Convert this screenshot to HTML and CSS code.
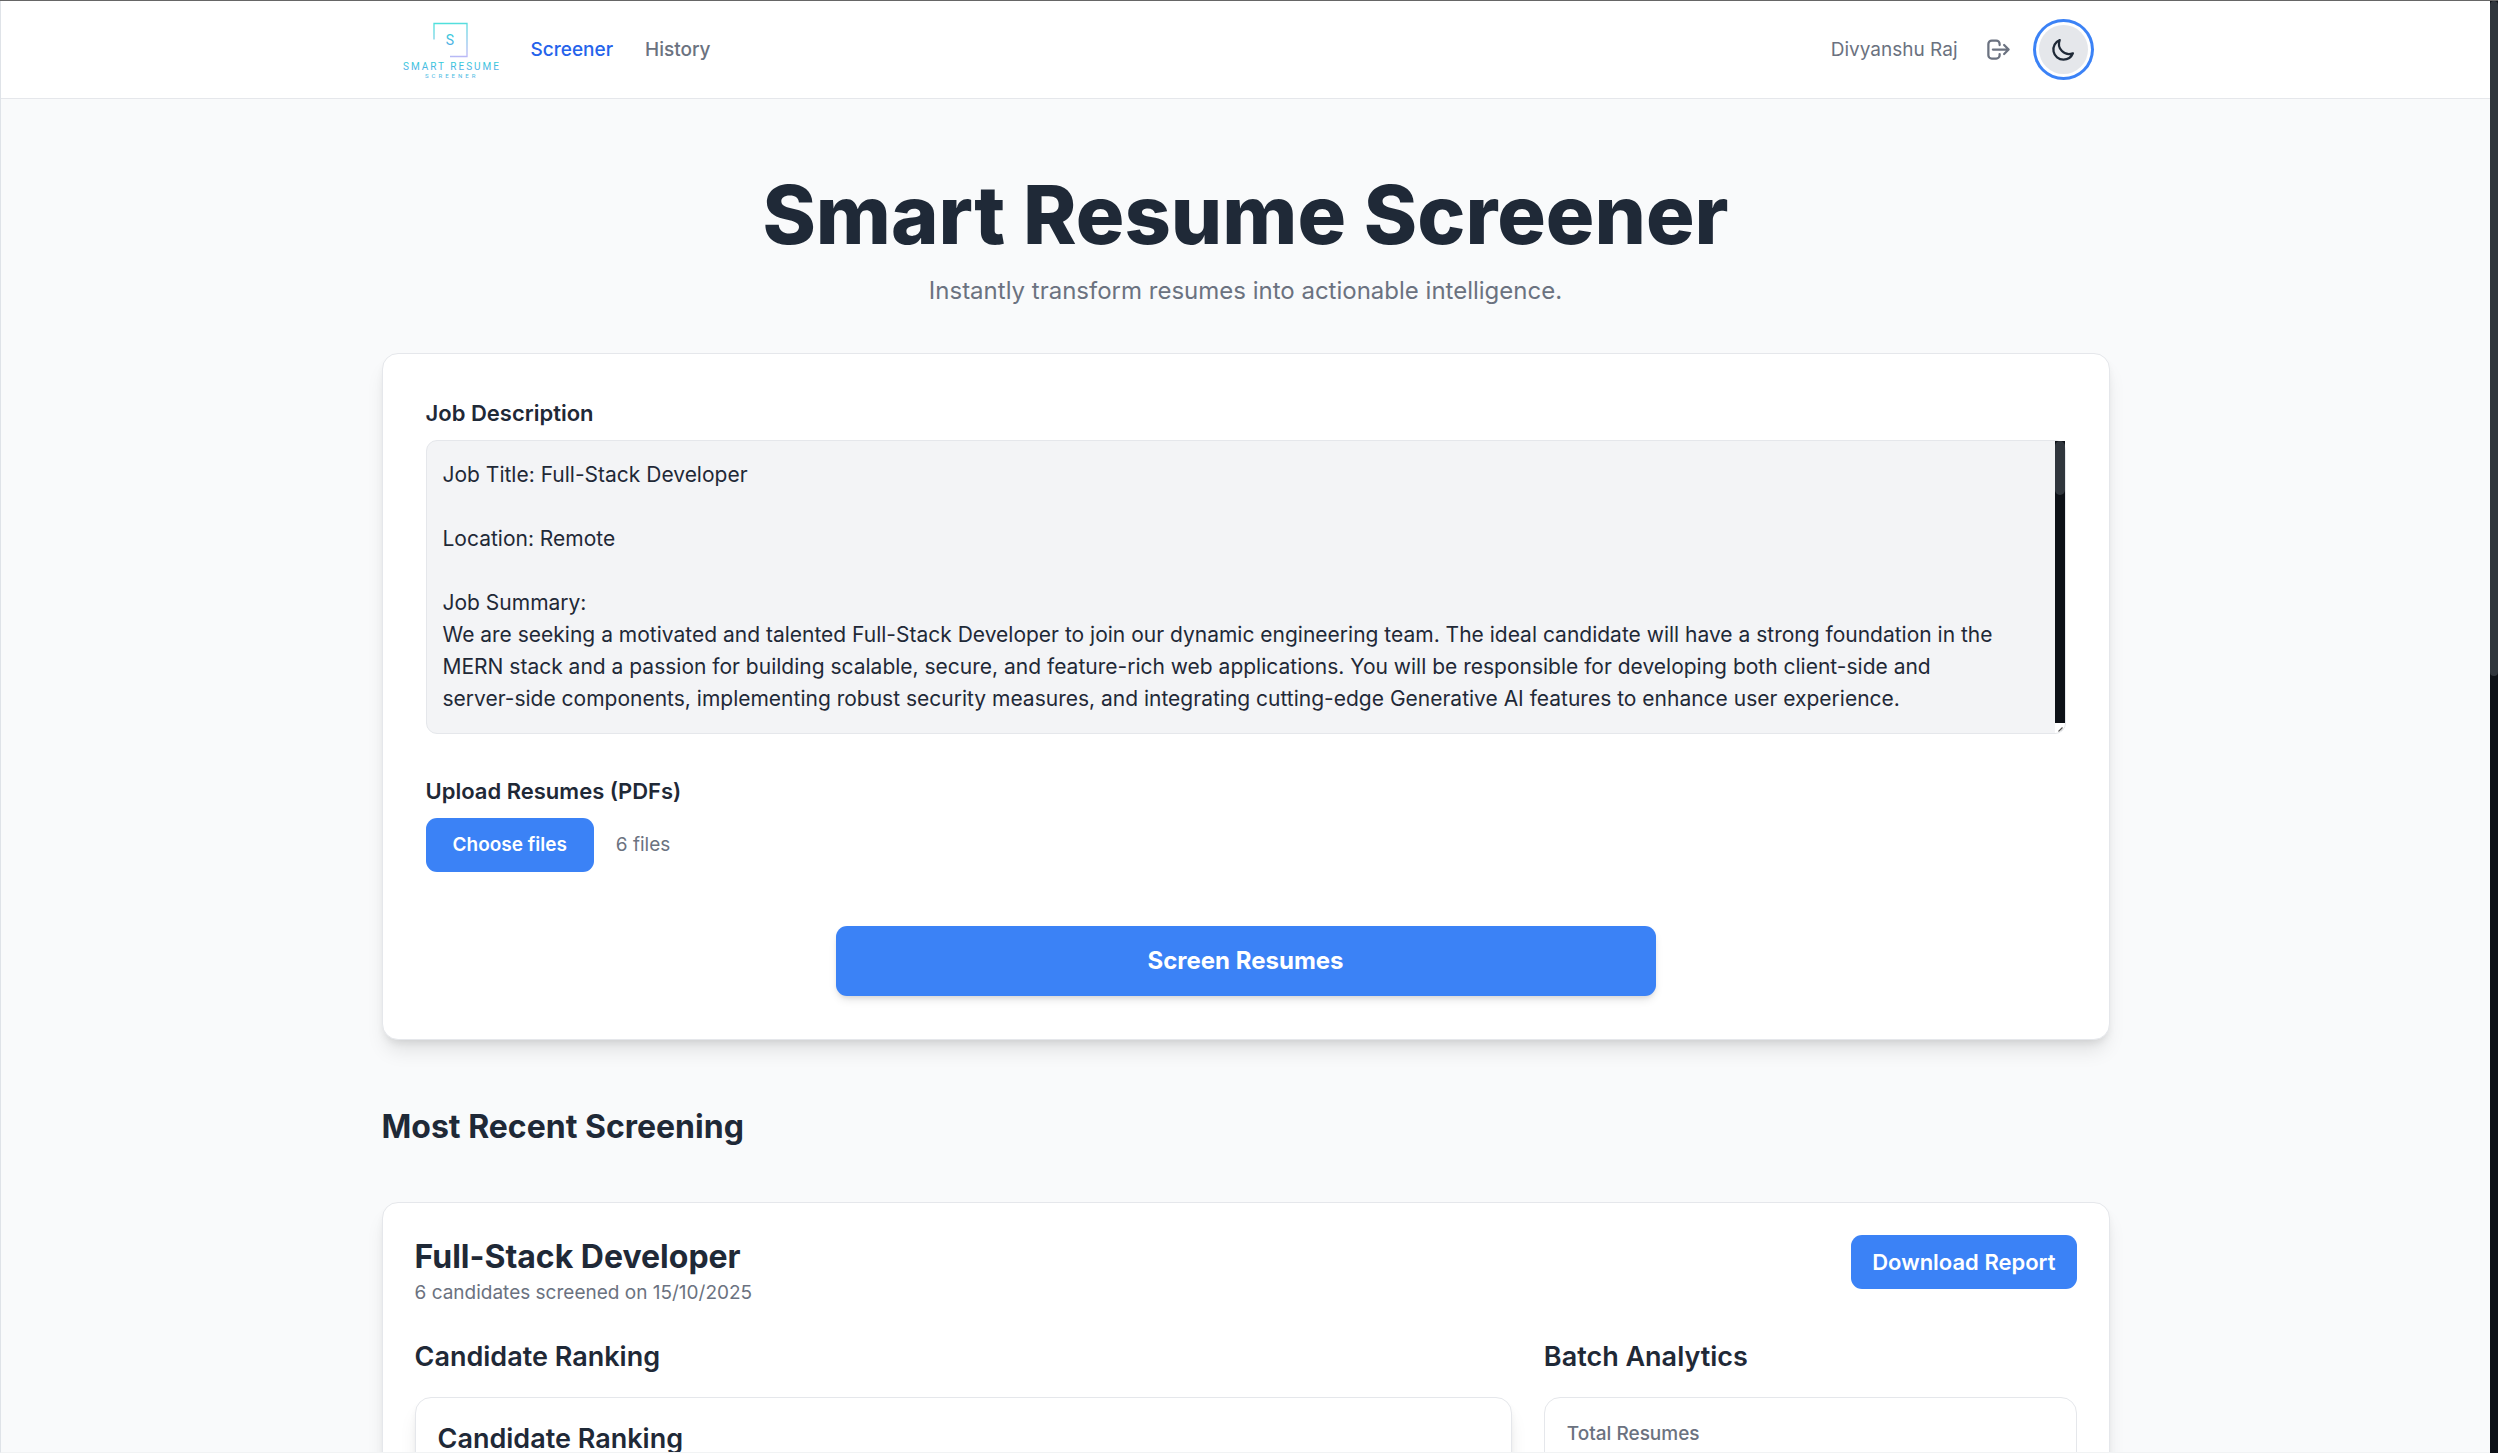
FILE: index.html
```html
<!DOCTYPE html>
<html lang="en">
<head>
<meta charset="utf-8">
<meta name="viewport" content="width=device-width, initial-scale=1">
<title>Smart Resume Screener</title>
<link rel="stylesheet" href="styles.css">
</head>
<body>
<div class="shell">
<div class="app">
  <header class="topbar">
    <nav class="topbar-inner" aria-label="Main">
      <a class="logo" href="#" aria-label="Smart Resume Screener home">
        <svg width="95" height="58" viewBox="0 0 95 58" fill="none">
          <defs>
            <linearGradient id="frame" gradientUnits="userSpaceOnUse" x1="40" y1="3" x2="46" y2="37">
              <stop offset="0" stop-color="#4fe0dc"/>
              <stop offset="1" stop-color="#b9b8f6"/>
            </linearGradient>
            <linearGradient id="word" x1="0" y1="0" x2="0" y2="1">
              <stop offset="0" stop-color="#30cfd8"/>
              <stop offset="1" stop-color="#5aa6e8"/>
            </linearGradient>
          </defs>
          <path d="M30 18.500V2.500H63V35.500H46" stroke="url(#frame)" stroke-width="1.3"/>
          <text class="logo-mark" x="46" y="24" text-anchor="middle" fill="url(#word)">S</text>
          <text class="logo-name" x="-1" y="49" fill="url(#word)">SMART RESUME</text>
          <text class="logo-sub" x="21" y="57" fill="url(#word)">SCREENER</text>
        </svg>
      </a>
      <a class="nav-link active" href="#">Screener</a>
      <a class="nav-link" href="#">History</a>
      <span class="user">Divyanshu Raj</span>
      <button class="icon-btn" type="button" aria-label="Log out">
        <svg width="27" height="27" viewBox="0 0 24 24" fill="none" stroke="currentColor" stroke-width="2" stroke-linecap="round" stroke-linejoin="round"><path d="M17 16l4-4m0 0l-4-4m4 4H7m6 4v1a3 3 0 01-3 3H6a3 3 0 01-3-3V7a3 3 0 013-3h4a3 3 0 013 3v1"/></svg>
      </button>
      <button class="theme-btn" type="button" aria-label="Toggle dark mode">
        <svg width="27" height="27" viewBox="0 0 24 24" fill="none" stroke="currentColor" stroke-width="2" stroke-linecap="round" stroke-linejoin="round"><path d="M20.354 15.354A9 9 0 018.646 3.646 9.003 9.003 0 0012 21a9.003 9.003 0 008.354-5.646z"/></svg>
      </button>
    </nav>
  </header>

  <main class="page">
    <div class="hero">
      <h1>Smart Resume Screener</h1>
      <p>Instantly transform resumes into actionable intelligence.</p>
    </div>

    <form class="card form-card">
      <label class="field-label" for="job">Job Description</label>
      <div class="job-wrap">
        <textarea class="job" id="job" name="job">Job Title: Full-Stack Developer

Location: Remote

Job Summary:
We are seeking a motivated and talented Full-Stack Developer to join our dynamic engineering team. The ideal candidate will have a strong foundation in the MERN stack and a passion for building scalable, secure, and feature-rich web applications. You will be responsible for developing both client-side and server-side components, implementing robust security measures, and integrating cutting-edge Generative AI features to enhance user experience.</textarea>
        <div class="job-scroll" aria-hidden="true">
          <div class="track"><div class="thumb job-thumb"></div></div>
          <svg class="grip" width="10" height="10" viewBox="0 0 10 10" stroke="#555" stroke-width="1.2"><path d="M3.500 8.500L7.500 4.500M6.500 8.500L8 7"/></svg>
        </div>
      </div>
      <label class="field-label upload-label" for="resumes">Upload Resumes (PDFs)</label>
      <div class="upload">
        <input class="file-input" id="resumes" type="file" accept="application/pdf" multiple>
        <label class="btn choose" for="resumes">Choose files</label>
        <span class="file-count">6 files</span>
      </div>
      <button class="btn submit" type="submit">Screen Resumes</button>
    </form>

    <h2 class="section-title">Most Recent Screening</h2>

    <section class="card result-card">
      <div class="result-head">
        <div>
          <h3 class="result-title">Full-Stack Developer</h3>
          <p class="result-meta">6 candidates screened on 15/10/2025</p>
        </div>
        <button class="btn download" type="button">Download Report</button>
      </div>
      <div class="result-grid">
        <div class="ranking">
          <h4 class="col-title">Candidate Ranking</h4>
          <div class="card panel">
            <h5 class="col-title">Candidate Ranking</h5>
          </div>
        </div>
        <div class="analytics">
          <h4 class="col-title">Batch Analytics</h4>
          <div class="panel">
            <p class="stat-label">Total Resumes</p>
          </div>
        </div>
      </div>
    </section>
  </main>
</div>
<div class="track page-scroll" aria-hidden="true"><div class="thumb page-thumb"></div></div>
</div>
</body>
</html>
```
FILE: styles.css
```css
*, *::before, *::after { box-sizing: border-box; }

:root {
  --ink: #1f2937;
  --muted: #6b7280;
  --line: #e5e7eb;
  --blue: #3b82f6;
}

body {
  margin: 0;
  background: #f9fafb;
  color: var(--ink);
  font-family: Inter, "Liberation Sans", sans-serif;
  font-size: 22px;
  line-height: 32px;
}

h1, h2, h3, h4, h5, p { margin: 0; }

a { text-decoration: none; }

button, textarea { font: inherit; }

/* scrolling shell */
.shell {
  display: flex;
  height: 100vh;
  border-top: 1px solid #666;
}

.app {
  flex: 1;
  overflow-y: auto;
  scrollbar-width: none;
  border-left: 1px solid #dfe3e8;
  border-bottom: 1px solid #f1f3f4;
}

.track {
  background: #0d1117;
}

.thumb {
  border-radius: 5px;
  background: #30363d;
}

.page-scroll { width: 8px; }
.page-thumb { height: 46.5%; }

/* top bar */
.topbar {
  background: #fff;
  border-bottom: 1px solid var(--line);
}

.topbar-inner {
  display: flex;
  align-items: center;
  max-width: 1728px;
  margin: 0 auto;
  padding: 24px 22px;
  height: 97px;
}

.logo { display: flex; }

.logo svg { overflow: visible; }

.logo-mark { font: 14px Roboto, sans-serif; }
.logo-name { font: 10px Roboto, sans-serif; letter-spacing: 2px; }
.logo-sub { font: 6px Roboto, sans-serif; letter-spacing: 3px; }

.nav-link {
  margin-left: 32px;
  color: var(--muted);
  font-size: 19px;
  font-weight: 500;
}

.nav-link.active { color: #2563eb; }

.user {
  margin-left: auto;
  color: var(--muted);
  font-size: 19px;
}

.icon-btn,
.theme-btn {
  display: grid;
  place-items: center;
  border: 0;
  padding: 0;
  cursor: pointer;
}

.icon-btn {
  margin: 0 27px;
  background: none;
  color: var(--muted);
}

.theme-btn {
  width: 49px;
  height: 49px;
  border-radius: 50%;
  background: var(--line);
  color: var(--ink);
  box-shadow: 0 0 0 3px #fff, 0 0 0 6px var(--blue);
}

/* page */
.page {
  max-width: 1728px;
  min-height: 208vh;
  margin: 0 auto;
  padding-top: 66px;
}

.hero {
  text-align: center;
  margin-bottom: 43px;
}

.hero h1 {
  font-size: 81px;
  font-weight: 800;
  line-height: 101px;
}

.hero p {
  margin-top: 6px;
  color: var(--muted);
  font-size: 24px;
  line-height: 38px;
}

.card {
  background: #fff;
  border: 1px solid var(--line);
  border-radius: 16px;
  box-shadow: 0 14px 20px -4px rgba(0, 0, 0, .1), 0 5px 8px -3px rgba(0, 0, 0, .1);
}

.form-card {
  display: flex;
  flex-direction: column;
  padding: 43px;
}

.field-label {
  font-weight: 600;
  margin-bottom: 11px;
}

.job-wrap {
  position: relative;
  display: flex;
}

.job {
  flex: 1;
  height: 294px;
  padding: 18px 64px 16px 16px;
  border: 1px solid var(--line);
  border-radius: 11px;
  background: #f3f4f6;
  color: var(--ink);
  font-size: 21px;
  resize: none;
  outline: 0;
  scrollbar-width: none;
}

/* scrollbar and resize grip over the text box's right edge */
.job-scroll {
  position: absolute;
  top: 1px;
  right: 1px;
  bottom: 1px;
  display: flex;
  flex-direction: column;
  width: 10px;
}

.job-scroll .track { flex: 1; }
.job-thumb { height: 54px; }

.grip {
  background: #fff;
  border-bottom-right-radius: 10px;
}

.upload-label { margin-top: 41px; }

.upload {
  display: flex;
  align-items: center;
  gap: 22px;
}

.file-input {
  position: absolute;
  width: 1px;
  height: 1px;
  opacity: 0;
}

.btn {
  border: 0;
  border-radius: 11px;
  background: var(--blue);
  color: #fff;
  font-weight: 600;
  cursor: pointer;
}

.choose {
  padding: 11px 27px;
  font-size: 19px;
}

.file-count {
  color: var(--muted);
  font-size: 19px;
}

.submit {
  align-self: center;
  width: 50%;
  margin-top: 54px;
  padding: 19px;
  font-size: 24px;
  font-weight: 700;
  box-shadow: 0 5px 8px -1px rgba(0, 0, 0, .1), 0 3px 5px -2px rgba(0, 0, 0, .1);
}

.section-title {
  margin: 65px 0 54px;
  font-size: 32px;
  line-height: 43px;
}

.result-card { padding: 32px; }

.result-head {
  display: flex;
  justify-content: space-between;
  align-items: flex-start;
}

.result-title {
  font-size: 32px;
  line-height: 44px;
}

.result-meta {
  color: var(--muted);
  font-size: 19px;
  line-height: 27px;
}

.download { padding: 11px 21px; }

.result-grid {
  display: grid;
  grid-template-columns: repeat(3, 1fr);
  gap: 32px;
  margin-top: 32px;
}

.ranking { grid-column: span 2; }

.col-title {
  font-size: 27px;
  font-weight: 600;
  line-height: 38px;
}

.panel {
  margin-top: 21px;
  padding: 22px;
  border: 1px solid var(--line);
  border-radius: 16px;
}

.stat-label {
  color: var(--muted);
  font-size: 19px;
  font-weight: 500;
  line-height: 27px;
}
```
